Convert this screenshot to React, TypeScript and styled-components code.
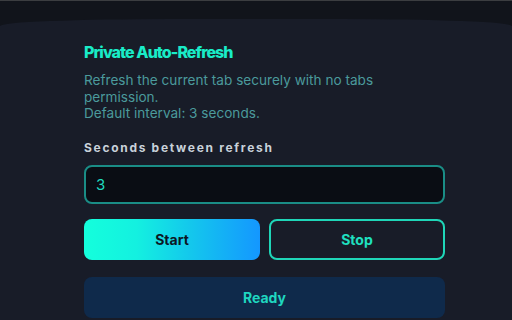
import React, { useState } from 'react';
import styled, { createGlobalStyle } from 'styled-components';

const GlobalStyle = createGlobalStyle`
  html, body {
    margin: 0;
    padding: 0;
    background: #11141b;
    overflow: hidden;
  }
  * {
    box-sizing: border-box;
  }
`;

const Screen = styled.div`
  width: 512px;
  height: 320px;
  background: #11141b;
  border-top: 1px solid #3b3d40;
  padding-top: 18px;
  font-family: Inter, 'Noto Sans', sans-serif;
`;

const Panel = styled.section`
  height: 100%;
  background: #181c28;
  border-radius: 170px 170px 0 0 / 7px 7px 0 0;
  padding: 22px 67px 0 84px;
  display: flex;
  flex-direction: column;
`;

const Title = styled.h1`
  margin: 0;
  font-size: 16px;
  font-weight: 800;
  letter-spacing: -0.95px;
  color: #19ecc8;
  line-height: 22px;
`;

const Description = styled.p`
  margin: 9px 0 0;
  font-size: 13.6px;
  line-height: 16.5px;
  color: #4b9a9c;
  max-width: 310px;
`;

const Label = styled.label`
  margin-top: 19px;
  font-size: 12px;
  font-weight: 700;
  letter-spacing: 1.7px;
  color: #c8d1da;
  line-height: 14px;
`;

const Input = styled.input`
  margin-top: 10px;
  height: 39px;
  width: 100%;
  background: #0a0d14;
  border: 2px solid #1a8d86;
  border-radius: 8px;
  padding: 0 10px;
  font-family: Inter, 'Noto Sans', sans-serif;
  font-size: 15px;
  color: #1fd9bf;
  outline: none;
`;

const ButtonRow = styled.div`
  margin-top: 15px;
  display: grid;
  grid-template-columns: 1fr 1fr;
  gap: 9px;
`;

const Button = styled.button<{ $variant: 'primary' | 'outline' }>`
  height: 41px;
  border-radius: 8px;
  font-family: Inter, 'Noto Sans', sans-serif;
  font-size: 14px;
  font-weight: 700;
  cursor: pointer;
  border: ${(p) => (p.$variant === 'outline' ? '2px solid #1fd6b8' : 'none')};
  background: ${(p) =>
    p.$variant === 'outline'
      ? 'transparent'
      : 'linear-gradient(90deg, #14ffdc 0%, #14f0e0 30%, #14c8ec 60%, #1497ff 100%)'};
  color: ${(p) => (p.$variant === 'outline' ? '#1fe0c0' : '#0c1724')};
`;

const Status = styled.div`
  margin-top: 17px;
  height: 41px;
  border-radius: 8px;
  background: #0f2a4b;
  color: #1fd6c0;
  font-size: 14px;
  font-weight: 700;
  display: flex;
  align-items: center;
  justify-content: center;
`;

const App: React.FC = () => {
  const [seconds, setSeconds] = useState('3');
  const [status, setStatus] = useState('Ready');

  return (
    <>
      <GlobalStyle />
      <Screen>
        <Panel>
          <Title>Private Auto-Refresh</Title>
          <Description>
            Refresh the current tab securely with no tabs permission.
            <br />
            Default interval: 3 seconds.
          </Description>
          <Label htmlFor="seconds">Seconds between refresh</Label>
          <Input
            id="seconds"
            value={seconds}
            onChange={(e) => setSeconds(e.target.value)}
          />
          <ButtonRow>
            <Button $variant="primary" onClick={() => setStatus('Running')}>
              Start
            </Button>
            <Button $variant="outline" onClick={() => setStatus('Ready')}>
              Stop
            </Button>
          </ButtonRow>
          <Status>{status}</Status>
        </Panel>
      </Screen>
    </>
  );
};

export default App;
